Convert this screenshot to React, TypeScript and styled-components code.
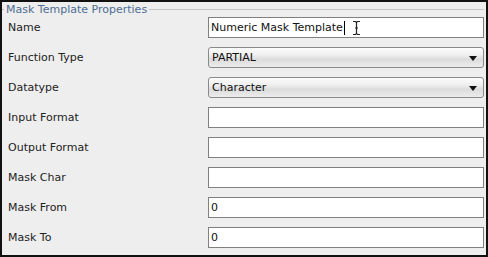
import React from 'react';
import styled, { createGlobalStyle } from 'styled-components';

const GlobalStyle = createGlobalStyle`
    html, body {
        margin: 0;
        padding: 0;
        background: #ffffff;
    }
`;

const Frame = styled.div`
    box-sizing: border-box;
    width: 488px;
    height: 257px;
    border: 2px solid #111111;
    background: #eeeeee;
    font-family: 'DejaVu Sans', 'Liberation Sans', sans-serif;
    font-size: 11px;
    color: #222222;
    display: flex;
    flex-direction: column;
`;

const Legend = styled.div`
    height: 15px;
    display: flex;
    align-items: center;
    gap: 2px;
    padding-right: 2px;
`;

const LegendLine = styled.div<{ $grow?: boolean }>`
    height: 1px;
    background: #c4c4c4;
    width: ${(p) => (p.$grow ? 'auto' : '2px')};
    flex: ${(p) => (p.$grow ? '1' : '0 0 auto')};
`;

const LegendText = styled.span`
    color: #4d6d93;
    font-size: 11px;
    line-height: 15px;
`;

const Rows = styled.div`
    display: flex;
    flex-direction: column;
    gap: 9px;
    padding: 0 2px 0 6px;
`;

const Row = styled.div`
    display: grid;
    grid-template-columns: 200px 1fr;
    align-items: center;
    height: 21px;
`;

const Label = styled.span`
    line-height: 21px;
`;

const Field = styled.div`
    position: relative;
    box-sizing: border-box;
    height: 21px;
    background: #ffffff;
    border: 1px solid #808080;
    display: flex;
    align-items: center;
    padding-left: 2px;
    color: #111111;
`;

const Caret = styled.span`
    display: inline-block;
    width: 1px;
    height: 14px;
    background: #000000;
    margin-left: 1px;
`;

const IBeam = styled.svg`
    position: absolute;
    left: 143px;
    top: 2px;
`;

const Select = styled.div`
    box-sizing: border-box;
    height: 21px;
    border: 1px solid #8a8a8a;
    border-radius: 3px;
    background: linear-gradient(#fbfbfb 0%, #f0f0f0 35%, #dcdcdc 60%, #ececec 100%);
    display: flex;
    align-items: center;
    justify-content: space-between;
    padding: 0 6px 0 3px;
    color: #111111;
`;

const Arrow = styled.span`
    width: 0;
    height: 0;
    border-left: 4px solid transparent;
    border-right: 4px solid transparent;
    border-top: 5px solid #111111;
    margin-top: 1px;
`;

type RowDef = { label: string; kind: 'text' | 'select'; value?: string; focused?: boolean };

const rows: RowDef[] = [
    { label: 'Name', kind: 'text', value: 'Numeric Mask Template', focused: true },
    { label: 'Function Type', kind: 'select', value: 'PARTIAL' },
    { label: 'Datatype', kind: 'select', value: 'Character' },
    { label: 'Input Format', kind: 'text' },
    { label: 'Output Format', kind: 'text' },
    { label: 'Mask Char', kind: 'text' },
    { label: 'Mask From', kind: 'text', value: '0' },
    { label: 'Mask To', kind: 'text', value: '0' },
];

export default function App() {
    return (
        <>
            <GlobalStyle />
            <Frame>
                <Legend>
                    <LegendLine />
                    <LegendText>Mask Template Properties</LegendText>
                    <LegendLine $grow />
                </Legend>
                <Rows>
                    {rows.map((r) => (
                        <Row key={r.label}>
                            <Label>{r.label}</Label>
                            {r.kind === 'select' ? (
                                <Select>
                                    <span>{r.value}</span>
                                    <Arrow />
                                </Select>
                            ) : (
                                <Field>
                                    {r.value}
                                    {r.focused && <Caret />}
                                    {r.focused && (
                                        <IBeam width="9" height="16" viewBox="0 0 9 16">
                                            <path
                                                d="M1 1.5h2.5L4.5 2.5L5.5 1.5H8M4.5 2.5V13.5M1 14.5h2.5L4.5 13.5L5.5 14.5H8M3 8h3"
                                                fill="none"
                                                stroke="#222"
                                                strokeWidth="1.2"
                                            />
                                        </IBeam>
                                    )}
                                </Field>
                            )}
                        </Row>
                    ))}
                </Rows>
            </Frame>
        </>
    );
}
